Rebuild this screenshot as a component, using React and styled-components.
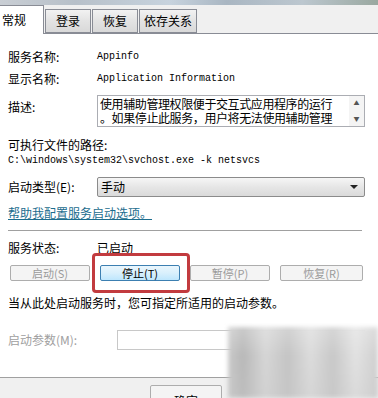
import React from 'react';
import styled, { createGlobalStyle } from 'styled-components';

const GlobalStyle = createGlobalStyle`
  body {
    margin: 0;
    background: #f0f0f0;
    font-family: "Noto Sans CJK SC", "Liberation Sans", sans-serif;
    font-size: 12px;
    color: #000;
  }
`;

const Window = styled.div`
  position: relative;
  width: 378px;
  height: 398px;
  overflow: hidden;
  background: #f0f0f0;
`;

const TitleStrip = styled.div`
  height: 5px;
  background: linear-gradient(90deg, #c9ced4 0%, #b7c0c9 20%, #c7d3de 45%, #a9b6c2 60%, #bcc7cf 80%, #9aa8a0 100%);
`;

const TabBar = styled.div`
  display: flex;
  align-items: flex-end;
  height: 28px;
  border-bottom: 1px solid #898c95;
`;

const Tab = styled.div`
  box-sizing: border-box;
  display: flex;
  align-items: center;
  justify-content: ${({ $active }) => ($active ? 'flex-start' : 'center')};
  width: ${({ $w }) => $w}px;
  height: ${({ $active }) => ($active ? 29 : 24)}px;
  margin-bottom: ${({ $active }) => ($active ? -1 : 0)}px;
  margin-right: 1px;
  padding-left: ${({ $active }) => ($active ? 2 : 0)}px;
  background: ${({ $active }) =>
    $active ? '#fff' : 'linear-gradient(#f2f2f2, #e3e3e3 50%, #d9d9d9)'};
  border: 1px solid #898c95;
  border-bottom: ${({ $active }) => ($active ? 'none' : '1px solid #898c95')};
  border-left: ${({ $first }) => ($first ? 'none' : '1px solid #898c95')};
  font-size: 12px;
  line-height: 14px;
`;

const Panel = styled.div`
  box-sizing: border-box;
  height: 343px;
  background: #fff;
  padding: 15px 13px 0 8px;
  display: flex;
  flex-direction: column;
`;

const Row = styled.div`
  display: grid;
  grid-template-columns: 89px 1fr;
  align-items: ${({ $top }) => ($top ? 'start' : 'center')};
  margin-top: ${({ $mt }) => $mt || 0}px;
  line-height: 16px;
`;

const Label = styled.span`
  color: ${({ $disabled }) => ($disabled ? '#a0a0a0' : '#000')};
  padding-top: ${({ $pt }) => $pt || 0}px;
  margin-top: ${({ $mt }) => $mt || 0}px;
  line-height: 16px;
  white-space: nowrap;
`;

const Mono = styled.span`
  font-family: "Liberation Mono", "Noto Sans CJK SC", monospace;
  font-size: 10px;
  line-height: 16px;
  white-space: nowrap;
`;

const TextBox = styled.div`
  box-sizing: border-box;
  height: 32px;
  border: 1px solid #abadb3;
  display: flex;
`;

const TextBoxBody = styled.div`
  flex: 1;
  padding: 1px 0 0 2px;
  font-size: 12px;
  line-height: 14px;
  letter-spacing: -0.4px;
  white-space: nowrap;
  overflow: hidden;
`;

const ScrollBar = styled.div`
  width: 15px;
  display: flex;
  flex-direction: column;
  justify-content: space-between;
  align-items: center;
  background: #f4f4f4;
  color: #555;
  font-size: 6px;
  line-height: 8px;
  padding: 3px 0;
`;

const Combo = styled.div`
  box-sizing: border-box;
  height: 20px;
  border: 1px solid #8b8b8b;
  border-radius: 2px;
  background: linear-gradient(#f6f6f6, #e6e6e6 50%, #dadada);
  display: flex;
  align-items: center;
  justify-content: space-between;
  padding: 0 6px 0 3px;
`;

const Arrow = styled.span`
  width: 0;
  height: 0;
  border-left: 4px solid transparent;
  border-right: 4px solid transparent;
  border-top: 4px solid #222;
`;

const HelpLink = styled.a`
  margin-top: 8px;
  line-height: 16px;
  color: #1c6d8e;
  text-decoration: underline;
  align-self: flex-start;
`;

const Separator = styled.div`
  margin-top: 9px;
  height: 1px;
  width: 354px;
  background: #a0a0a0;
`;

const ButtonRow = styled.div`
  display: flex;
  gap: 10px;
  margin-top: 9px;
  padding-left: 2px;
`;

const Btn = styled.div`
  position: relative;
  box-sizing: border-box;
  width: ${({ $w }) => $w || 80}px;
  height: ${({ $h }) => $h || 16}px;
  display: flex;
  align-items: center;
  justify-content: center;
  font-size: 11px;
  border: 1px solid ${({ $focus }) => ($focus ? '#3c7fb1' : '#adadad')};
  border-radius: 2px;
  color: ${({ $disabled }) => ($disabled ? '#9a9a9a' : '#000')};
  background: ${({ $focus }) =>
    $focus ? 'linear-gradient(#eaf6fd, #d9f0fc 50%, #bee6fd)' : '#f4f4f4'};
`;

const Highlight = styled.div`
  position: absolute;
  left: -9px;
  top: -13px;
  width: 98px;
  height: 40px;
  box-sizing: border-box;
  border: 3px solid #c23b3f;
  border-radius: 4px;
  pointer-events: none;
`;

const Note = styled.div`
  margin-top: 14px;
  line-height: 16px;
`;

const ParamInput = styled.div`
  box-sizing: border-box;
  height: 20px;
  margin-left: 20px;
  border: 1px solid #c8c8c8;
  background: #fff;
`;

const Footer = styled.div`
  border-top: 1px solid #a0a0a0;
  display: flex;
  padding: 7px 0 0 150px;
`;

const OkLabel = styled.span`
  font-size: 12px;
  margin-top: 6px;
`;

const Watermark = styled.div`
  position: absolute;
  left: 228px;
  top: 327px;
  width: 150px;
  height: 71px;
  filter: blur(2px);
  background:
    linear-gradient(180deg, rgba(255,255,255,0.25), rgba(255,255,255,0) 40%, rgba(200,200,200,0.3)),
    linear-gradient(90deg, #c9c9c9 0%, #b8b8b8 10%, #d6d6d6 25%, #c4c4c4 40%, #dcdcdc 55%, #c8c8c8 70%, #e2e2e2 85%, #cfcfcf 100%);
`;

const App = () => (
  <Window>
    <GlobalStyle />
    <TitleStrip />
    <TabBar>
      <Tab $active $first $w={44}>常规</Tab>
      <Tab $w={46}>登录</Tab>
      <Tab $w={46}>恢复</Tab>
      <Tab $w={58}>依存关系</Tab>
    </TabBar>
    <Panel>
      <Row>
        <Label>服务名称:</Label>
        <Mono>Appinfo</Mono>
      </Row>
      <Row $mt={6}>
        <Label>显示名称:</Label>
        <Mono>Application Information</Mono>
      </Row>
      <Row $mt={8} $top>
        <Label $pt={4}>描述:</Label>
        <TextBox>
          <TextBoxBody>
            使用辅助管理权限便于交互式应用程序的运行<br />
            。如果停止此服务，用户将无法使用辅助管理
          </TextBoxBody>
          <ScrollBar>
            <span>▲</span>
            <span>▼</span>
          </ScrollBar>
        </TextBox>
      </Row>
      <Label $mt={10}>可执行文件的路径:</Label>
      <Mono>C:\windows\system32\svchost.exe -k netsvcs</Mono>
      <Row $mt={8}>
        <Label>启动类型(E):</Label>
        <Combo>
          <span>手动</span>
          <Arrow />
        </Combo>
      </Row>
      <HelpLink>帮助我配置服务启动选项。</HelpLink>
      <Separator />
      <Row $mt={9}>
        <Label>服务状态:</Label>
        <span>已启动</span>
      </Row>
      <ButtonRow>
        <Btn $disabled>启动(S)</Btn>
        <Btn $focus>
          停止(T)
          <Highlight />
        </Btn>
        <Btn $disabled>暂停(P)</Btn>
        <Btn $disabled $w={83}>恢复(R)</Btn>
      </ButtonRow>
      <Note>当从此处启动服务时，您可指定所适用的启动参数。</Note>
      <Row $mt={19}>
        <Label $disabled>启动参数(M):</Label>
        <ParamInput />
      </Row>
    </Panel>
    <Footer>
      <Btn $w={72} $h={24}>
        <OkLabel>确定</OkLabel>
      </Btn>
    </Footer>
    <Watermark />
  </Window>
);

export default App;
